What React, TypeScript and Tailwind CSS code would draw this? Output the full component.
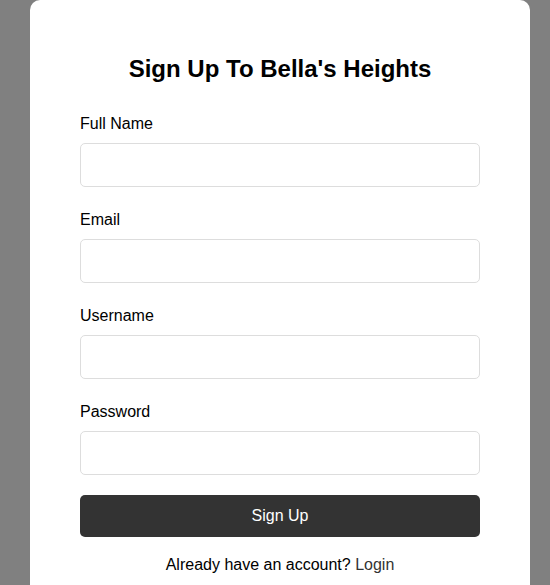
export default function App() {
  const fields = ["Full Name", "Email", "Username", "Password"];
  return (
    <div
      className="min-h-screen bg-[#808080] flex"
      style={{ fontFamily: '"Liberation Sans", Arial, sans-serif' }}
    >
      <div className="w-[500px] ml-[30px] bg-white rounded-[10px] px-[50px] pt-[55px] pb-10 h-fit">
        <h2 className="text-center text-[24px] font-bold text-black leading-[normal] mb-[32px]">
          Sign Up To Bella's Heights
        </h2>
        <form className="flex flex-col">
          {fields.map((label, i) => (
            <div key={label} className={i === fields.length - 1 ? "mb-[20px]" : "mb-[24px]"}>
              <label className="block text-[16px] text-black leading-[normal] mb-[10px]">
                {label}
              </label>
              <input
                type={label === "Password" ? "password" : "text"}
                className="w-full h-[44px] border border-[#dddddd] rounded-[5px] px-3 text-[16px] outline-none"
              />
            </div>
          ))}
          <button
            type="button"
            className="w-full h-[42px] bg-[#333333] text-white text-[16px] rounded-[5px]"
          >
            Sign Up
          </button>
        </form>
        <p className="text-center text-[16px] text-black leading-[normal] mt-[19px]">
          Already have an account? <a className="text-[#333333]">Login</a>
        </p>
      </div>
    </div>
  );
}
